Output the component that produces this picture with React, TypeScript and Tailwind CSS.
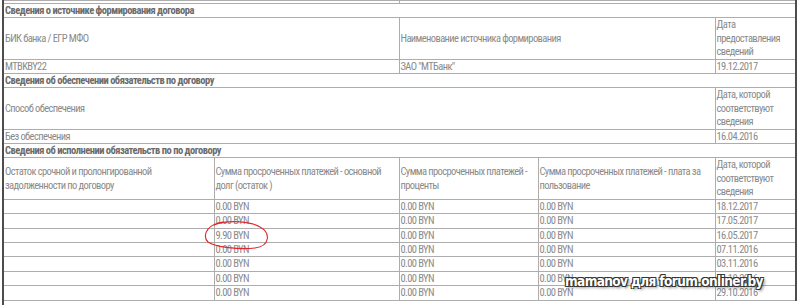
const dates = [
  "18.12.2017",
  "17.05.2017",
  "16.05.2017",
  "07.11.2016",
  "03.11.2016",
  "31.10.2016",
  "29.10.2016",
];

const cell = "border border-[#adadad] p-0 pl-px align-middle";
const section =
  "border border-[#adadad] p-0 pl-px font-bold tracking-[-0.5px] text-[#6b6b6b]";

export default function App() {
  return (
    <div className="relative h-[305px] w-[800px] overflow-hidden bg-white font-['Roboto_Condensed','Liberation_Sans_Narrow','Arial_Narrow',sans-serif] text-[10.5px] leading-[13.4px] tracking-[-0.6px] text-[#8a8a8a]">
      <div className="ml-[2px] h-[305px] border-l-2 border-[#4d4d4d]">
        <table className="-ml-[2px] w-[793px] table-fixed border-collapse border-x-2 border-x-[#4d4d4d]">
          <colgroup>
            <col className="w-[211px]" />
            <col className="w-[185px]" />
            <col className="w-[139px]" />
            <col className="w-[177px]" />
            <col className="w-[81px]" />
          </colgroup>
          <tbody>
            <tr className="h-[3px]">
              <td colSpan={2} className="border border-[#adadad] p-0 leading-[0]" />
              <td colSpan={3} className="border border-[#adadad] p-0 leading-[0]" />
            </tr>

            <tr>
              <td colSpan={5} className={section}>
                Сведения о источнике формирования договора
              </td>
            </tr>
            <tr>
              <td colSpan={2} className={cell}>БИК банка / ЕГР МФО</td>
              <td colSpan={2} className={cell}>Наименование источника формирования</td>
              <td className={cell}>
                Дата
                <br />
                предоставления
                <br />
                сведений
              </td>
            </tr>
            <tr>
              <td colSpan={2} className={cell}>MTBKBY22</td>
              <td colSpan={2} className={cell}>ЗАО "МТБанк"</td>
              <td className={cell}>19.12.2017</td>
            </tr>

            <tr>
              <td colSpan={5} className={section}>
                Сведения об обеспечении обязательств по договору
              </td>
            </tr>
            <tr>
              <td colSpan={4} className={cell}>Способ обеспечения</td>
              <td className={cell}>
                Дата, которой
                <br />
                соответствуют
                <br />
                сведения
              </td>
            </tr>
            <tr>
              <td colSpan={4} className={cell}>Без обеспечения</td>
              <td className={cell}>16.04.2016</td>
            </tr>

            <tr>
              <td colSpan={5} className={section}>
                Сведения об исполнении обязательств по по договору
              </td>
            </tr>
            <tr>
              <td className={cell}>
                Остаток срочной и пролонгированной
                <br />
                задолженности по договору
              </td>
              <td className={cell}>
                Сумма просроченных платежей - основной
                <br />
                долг (остаток )
              </td>
              <td className={cell}>
                Сумма просроченных платежей -
                <br />
                проценты
              </td>
              <td className={cell}>
                Сумма просроченных платежей - плата за
                <br />
                пользование
              </td>
              <td className={cell}>
                Дата, которой
                <br />
                соответствуют
                <br />
                сведения
              </td>
            </tr>
            {dates.map((d, i) => (
              <tr key={d}>
                <td className={cell}>&nbsp;</td>
                <td className={cell}>{i === 2 ? "9.90 BYN" : "0.00 BYN"}</td>
                <td className={cell}>0.00 BYN</td>
                <td className={cell}>0.00 BYN</td>
                <td className={cell}>{d}</td>
              </tr>
            ))}
          </tbody>
        </table>
      </div>

      {/* hand drawn mark around the overdue amount */}
      <svg
        className="absolute left-[200px] top-[218px]"
        width="75"
        height="36"
        viewBox="0 0 75 36"
        fill="none"
      >
        <path
          d="M14 7 C30 1, 52 4, 60 9 C71 15, 70 28, 55 30 C40 32, 15 29, 8 24 C3 19, 5 9, 18 5 L23 4"
          stroke="#e3262a"
          strokeWidth="1.1"
          strokeLinecap="round"
        />
      </svg>

      <div className="absolute left-[565px] top-[272px] whitespace-nowrap font-['DejaVu_Sans_Condensed','DejaVu_Sans',sans-serif] text-[13.5px] font-bold leading-[18px] text-white [text-shadow:1px_1px_0_#333,-1px_-1px_0_#333,1px_-1px_0_#333,-1px_1px_0_#333,2px_2px_3px_rgba(0,0,0,0.5)]">
        mamanov для forum.onliner.by
      </div>
    </div>
  );
}
